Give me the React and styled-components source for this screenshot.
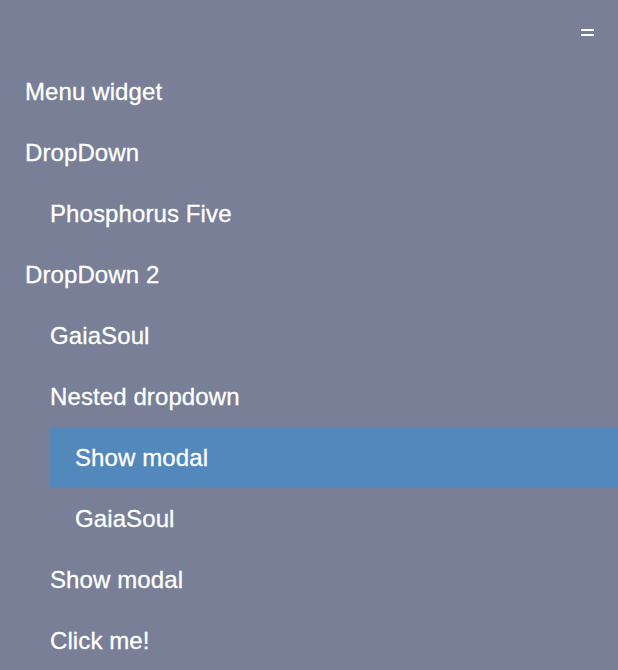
import React from 'react'
import styled, { createGlobalStyle } from 'styled-components'

const GlobalStyle = createGlobalStyle`
  html, body {
    margin: 0;
    padding: 0;
    background: #787f96;
  }
  body {
    font-family: "Liberation Sans", Arial, Helvetica, sans-serif;
    -webkit-font-smoothing: antialiased;
  }
`

const Panel = styled.nav`
  width: 618px;
  min-height: 670px;
  background: #787f96;
  color: #fff;
  overflow: hidden;
`

const TopBar = styled.div`
  height: 62px;
  display: flex;
  justify-content: flex-end;
  align-items: flex-start;
  padding-right: 24px;
  box-sizing: border-box;
`

const Burger = styled.button`
  margin-top: 29px;
  width: 13px;
  height: 7px;
  padding: 0;
  border: none;
  background: transparent;
  display: flex;
  flex-direction: column;
  justify-content: space-between;
  cursor: pointer;

  span {
    display: block;
    height: 2px;
    background: #fff;
  }
`

const List = styled.ul`
  list-style: none;
  margin: 0;
  padding: 0;
  margin-left: ${p => (p.$nested ? 25 : 0)}px;
`

const Item = styled.li`
  height: 60px;
  margin-bottom: 1px;
  display: flex;
  align-items: center;
  padding-left: 25px;
  font-size: 24px;
  letter-spacing: 0.1px;
  -webkit-text-stroke: 0.3px #fff;
  background: ${p => (p.$active ? '#5288bb' : 'transparent')};
  cursor: pointer;
`

const menu = [
  { label: 'Menu widget' },
  { label: 'DropDown', children: [{ label: 'Phosphorus Five' }] },
  {
    label: 'DropDown 2',
    children: [
      { label: 'GaiaSoul' },
      {
        label: 'Nested dropdown',
        children: [{ label: 'Show modal', active: true }, { label: 'GaiaSoul' }],
      },
      { label: 'Show modal' },
      { label: 'Click me!' },
    ],
  },
]

const Tree = ({ items, nested }) => (
  <List $nested={nested}>
    {items.map((item, i) => (
      <React.Fragment key={i}>
        <Item $active={item.active}>{item.label}</Item>
        {item.children && (
          <li>
            <Tree items={item.children} nested />
          </li>
        )}
      </React.Fragment>
    ))}
  </List>
)

export default function App() {
  return (
    <Panel>
      <GlobalStyle />
      <TopBar>
        <Burger aria-label="menu">
          <span />
          <span />
        </Burger>
      </TopBar>
      <Tree items={menu} />
    </Panel>
  )
}
